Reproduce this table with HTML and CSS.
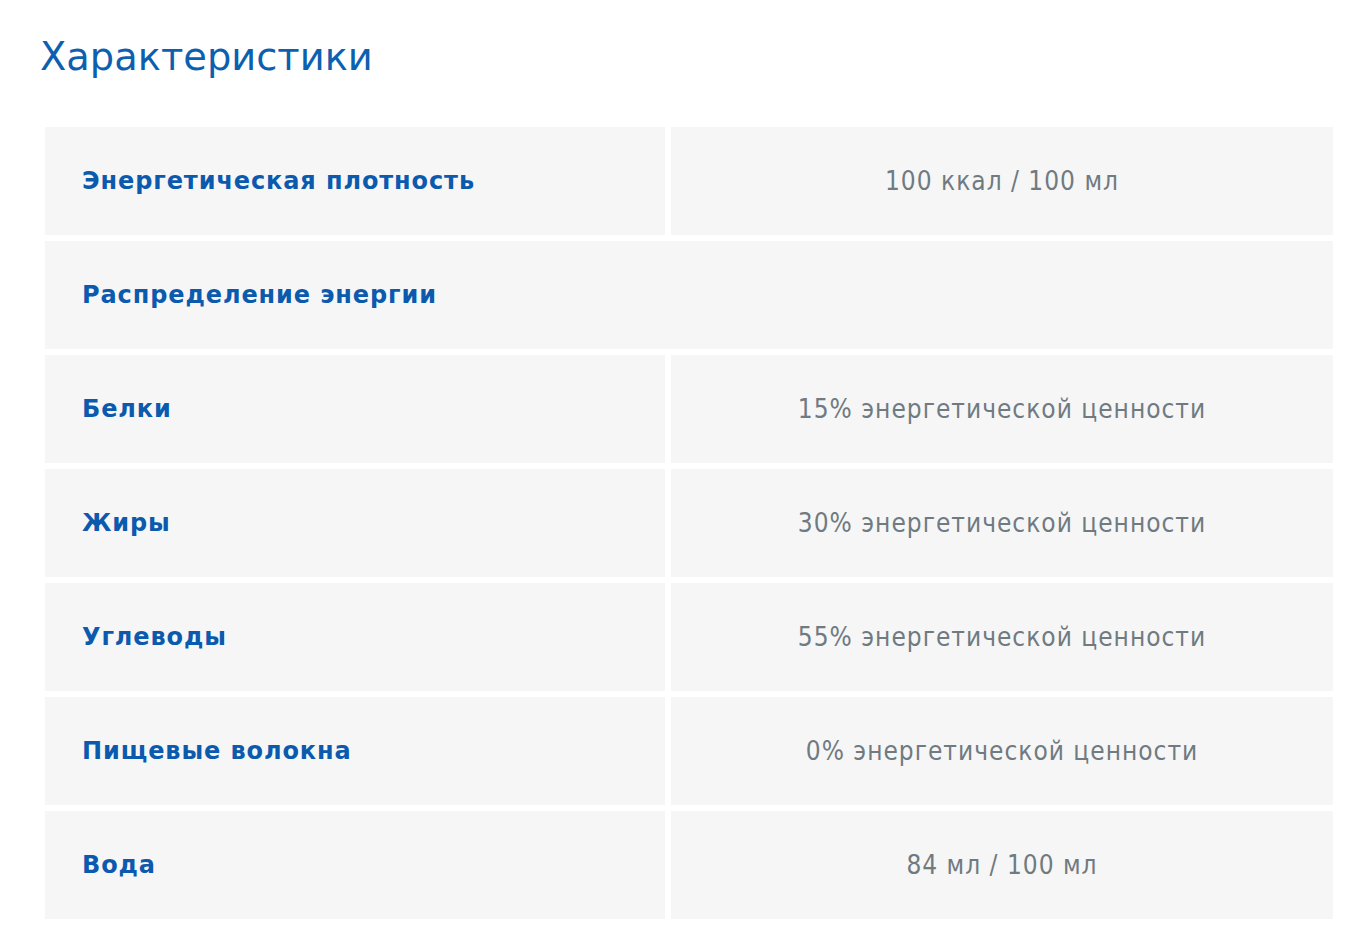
FILE: index.html
```html
<!DOCTYPE html>
<html lang="ru">
<head>
<meta charset="utf-8">
<title>Характеристики</title>
<link rel="stylesheet" href="styles.css">
</head>
<body>
<section class="specs">
  <h2 class="specs-title">Характеристики</h2>
  <table class="specs-table">
    <tbody>
      <tr><th class="label">Энергетическая плотность</th><td class="value">100 ккал / 100 мл</td></tr>
      <tr><th class="label" colspan="2">Распределение энергии</th></tr>
      <tr><th class="label">Белки</th><td class="value">15% энергетической ценности</td></tr>
      <tr><th class="label">Жиры</th><td class="value">30% энергетической ценности</td></tr>
      <tr><th class="label">Углеводы</th><td class="value">55% энергетической ценности</td></tr>
      <tr><th class="label">Пищевые волокна</th><td class="value">0% энергетической ценности</td></tr>
      <tr><th class="label">Вода</th><td class="value">84 мл / 100 мл</td></tr>
    </tbody>
  </table>
</section>
</body>
</html>
```

FILE: styles.css
```css
html, body {
  margin: 0;
  padding: 0;
  background: #ffffff;
}
body {
  font-family: "DejaVu Sans", Verdana, sans-serif;
}
.specs {
  padding: 33px 24px 0 39px;
}
.specs-title {
  margin: 0 0 40px 1px;
  font-size: 38.4px;
  font-weight: normal;
  line-height: 48px;
  color: #0d5fb0;
}
.specs-table {
  width: 1300px;
  border-collapse: separate;
  border-spacing: 6px;
}
.specs-table th,
.specs-table td {
  background: #f6f6f6;
  height: 108px;
  padding: 0;
  box-sizing: border-box;
}
.label {
  width: 620px;
  text-align: left;
  padding-left: 37px !important;
  font-size: 24px;
  letter-spacing: 0.9px;
  font-weight: bold;
  color: #0b5aae;
}
.value {
  text-align: center;
  font-family: "DejaVu Sans Condensed", "DejaVu Sans", sans-serif;
  font-stretch: condensed;
  font-size: 26px;
  letter-spacing: 1px;
  color: #707a81;
}
```
